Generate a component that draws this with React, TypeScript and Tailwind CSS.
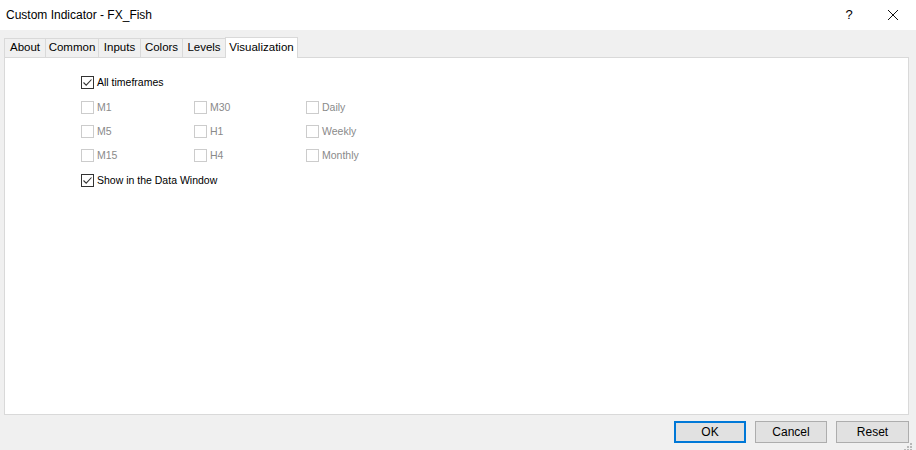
import React from "react";

const tabs: [string, string][] = [
  ["About", "w-[42px]"],
  ["Common", "w-[54px]"],
  ["Inputs", "w-[43px]"],
  ["Colors", "w-[43px]"],
  ["Levels", "w-[44px]"],
];

const grid = [
  ["M1", "M30", "Daily"],
  ["M5", "H1", "Weekly"],
  ["M15", "H4", "Monthly"],
];

function Box({ checked, disabled }: { checked?: boolean; disabled?: boolean }) {
  return (
    <div
      className={
        "w-[13px] h-[13px] bg-white border flex items-center justify-center shrink-0 " +
        (disabled ? "border-[#cccccc]" : "border-[#333333]")
      }
    >
      {checked && (
        <svg width="11" height="11" viewBox="0 0 11 11">
          <path d="M1.5 5.5 L4.2 8.2 L9.5 2.5" fill="none" stroke="#333333" strokeWidth="1.1" />
        </svg>
      )}
    </div>
  );
}

function Check({ label, checked, disabled }: { label: string; checked?: boolean; disabled?: boolean }) {
  return (
    <div className="flex items-center gap-[3px] h-[13px]">
      <Box checked={checked} disabled={disabled} />
      <span className={"text-[10.5px] leading-none " + (disabled ? "text-[#8a8a8a]" : "text-black")}>{label}</span>
    </div>
  );
}

export default function App() {
  return (
    <div
      className="w-[916px] h-[450px] flex flex-col bg-[#f0f0f0] overflow-hidden"
      style={{ fontFamily: '"Liberation Sans", Arial, sans-serif' }}
    >
      <div className="h-[30px] bg-white flex items-center shrink-0">
        <div className="pl-[6px] text-[12px] text-black flex-1">Custom Indicator - FX_Fish</div>
        <div className="w-[30px] text-center text-[13px] text-black mr-[14px]">?</div>
        <div className="w-[30px] flex justify-center mr-[8px]">
          <svg width="12" height="12" viewBox="0 0 12 12">
            <path d="M1 1 L11 11 M11 1 L1 11" stroke="#111" strokeWidth="1" />
          </svg>
        </div>
      </div>

      <div className="flex-1 flex flex-col px-[4px] pt-[7px]">
        <div className="flex items-end h-[20px] relative z-10">
          {tabs.map(([t, w]) => (
            <div
              key={t}
              className={
                w +
                " h-[19px] flex items-center justify-center text-[11.5px] text-black border border-[#d9d9d9] border-b-0 -ml-px first:ml-0 bg-[#f0f0f0]"
              }
            >
              {t}
            </div>
          ))}
          <div className="w-[73px] h-[21px] mb-[-1px] flex items-center justify-center text-[11.5px] text-black bg-white border border-[#d9d9d9] border-b-0 -ml-px">
            Visualization
          </div>
        </div>
        <div className="h-[358px] bg-white border border-[#d9d9d9] mr-[3px] pl-[76px] pt-[18px]">
          <Check label="All timeframes" checked />
          <div className="grid grid-cols-[113px_112px_100px] gap-y-[11px] mt-[12px]">
            {grid.flat().map((l) => (
              <Check key={l} label={l} disabled />
            ))}
          </div>
          <div className="mt-[12px]">
            <Check label="Show in the Data Window" checked />
          </div>
        </div>
        <div className="flex justify-end gap-[9px] mt-[6px] mr-[3px] relative">
          <button className="w-[72px] h-[22px] bg-[#e1e1e1] border-2 border-[#0078d7] text-[12px] text-black">OK</button>
          <button className="w-[72px] h-[22px] bg-[#e1e1e1] border border-[#adadad] text-[12px] text-black">Cancel</button>
          <button className="w-[73px] h-[22px] bg-[#e1e1e1] border border-[#adadad] text-[12px] text-black">Reset</button>
          <svg className="absolute right-[-3px] bottom-[-8px]" width="8" height="8" viewBox="0 0 8 8">
            <rect x="6" y="0" width="2" height="2" fill="#b8b8b8" />
            <rect x="3" y="3" width="2" height="2" fill="#b8b8b8" />
            <rect x="6" y="3" width="2" height="2" fill="#b8b8b8" />
            <rect x="0" y="6" width="2" height="2" fill="#b8b8b8" />
            <rect x="3" y="6" width="2" height="2" fill="#b8b8b8" />
            <rect x="6" y="6" width="2" height="2" fill="#b8b8b8" />
          </svg>
        </div>
      </div>
    </div>
  );
}
